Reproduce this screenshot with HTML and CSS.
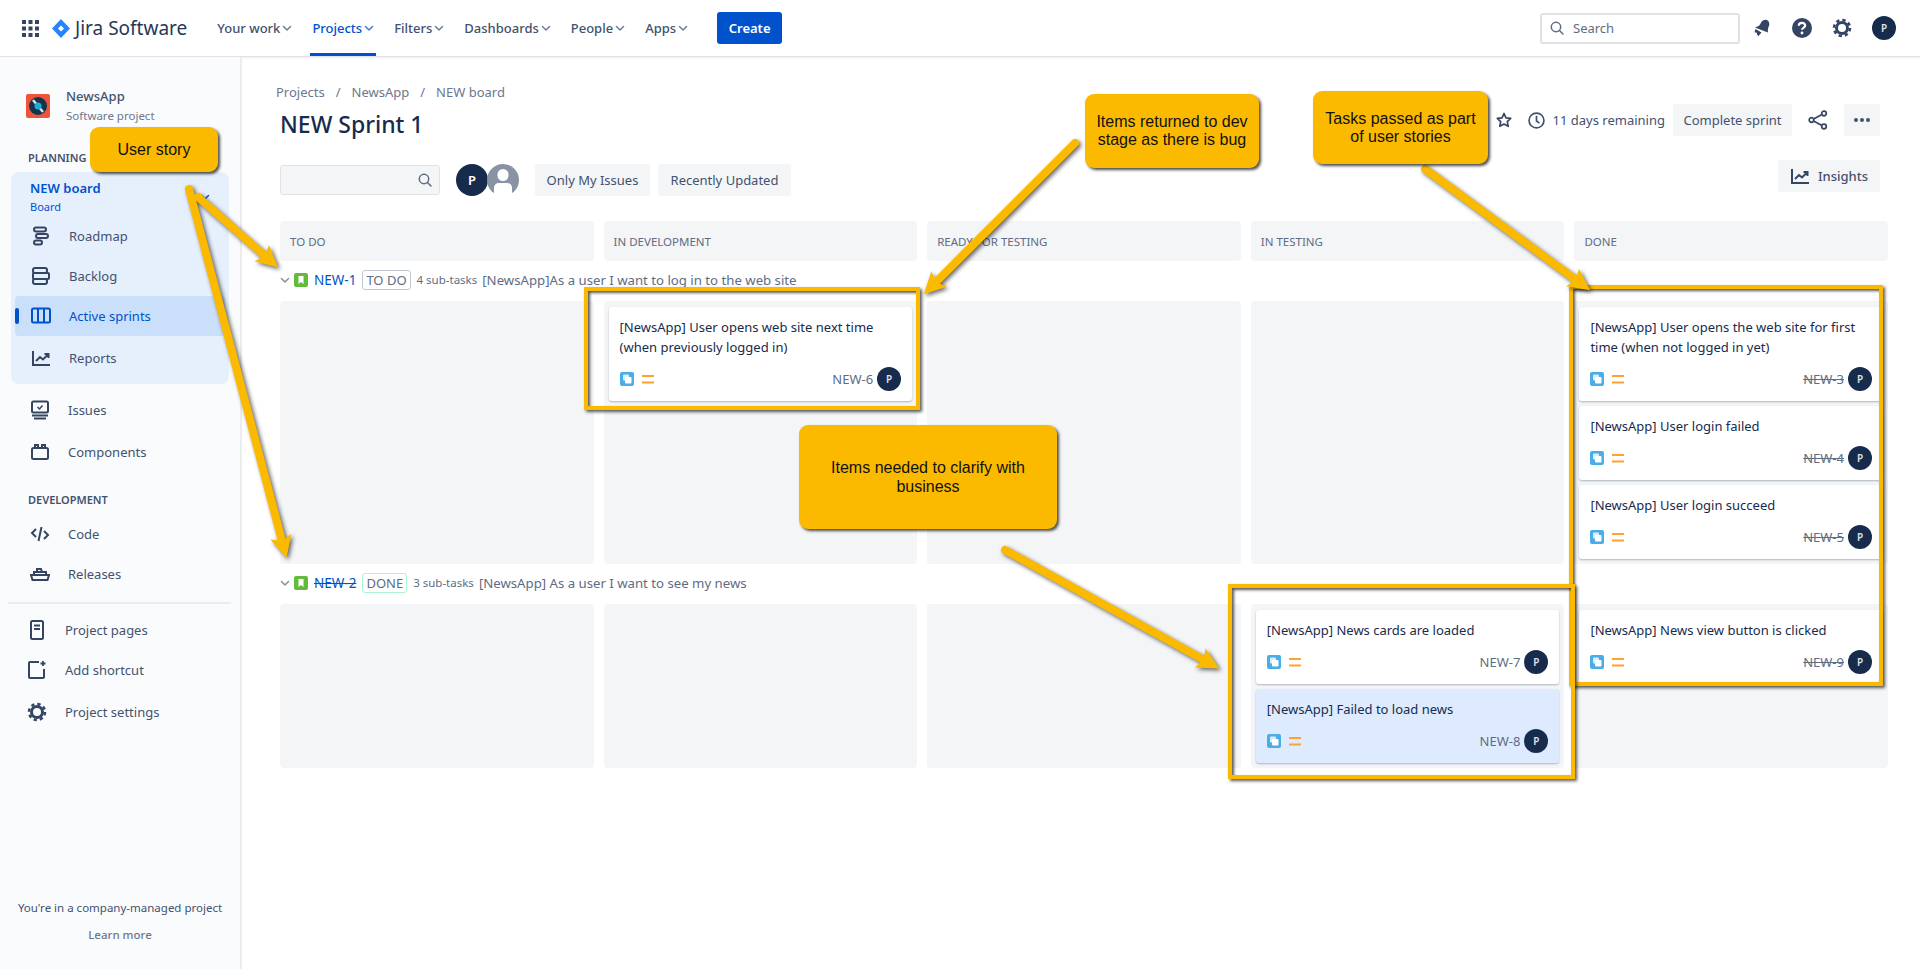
FILE: index.html
```html
<!DOCTYPE html>
<html lang="en">
<head>
  <meta charset="UTF-8" />
  <meta name="viewport" content="width=device-width, initial-scale=1.0"/>
  <title>NEW Sprint 1 - Jira Software</title>
  <link rel="stylesheet" href="styles.css">
</head>
<body>

  <!-- Shared icons -->
  <svg class="icon-defs" aria-hidden="true">
    <symbol id="i-chev" viewBox="0 0 10 10"><path d="M1.5 3.5 5 7l3.5-3.5" fill="none" stroke="currentColor" stroke-width="1.5" stroke-linecap="round" stroke-linejoin="round"/></symbol>
    <symbol id="i-subtask" viewBox="0 0 14 14"><rect width="14" height="14" rx="2" fill="#4bade8"/><rect x="3" y="2.500" width="6" height="6" rx="1" fill="#fff" opacity=".8"/><rect x="5" y="5" width="6.500" height="6.500" rx="1" fill="#fff"/></symbol>
    <symbol id="i-medium" viewBox="0 0 12 9"><path d="M0 1h12M0 7.5h12" stroke="#ffa033" stroke-width="2"/></symbol>
    <symbol id="i-story" viewBox="0 0 14 14"><rect width="14" height="14" rx="2" fill="#63ba3c"/><path d="M4.5 3h5v8L7 9l-2.500 2z" fill="#fff"/></symbol>
    <symbol id="i-search" viewBox="0 0 16 16"><circle cx="7" cy="7" r="4.700" fill="none" stroke="currentColor" stroke-width="1.500"/><path d="m10.500 10.500 3.500 3.500" stroke="currentColor" stroke-width="1.500" stroke-linecap="round"/></symbol>
    <symbol id="i-chart" viewBox="0 0 20 20"><path d="M2 3v14h17" fill="none" stroke="currentColor" stroke-width="2"/><path d="m5 13 4-4 3 2.500L17 6.500M13.500 6H17.500V10" fill="none" stroke="currentColor" stroke-width="2"/></symbol>
    <symbol id="i-gear" viewBox="0 0 20 20"><circle cx="10" cy="10" r="5.500" fill="none" stroke="currentColor" stroke-width="3"/><circle cx="10" cy="10" r="8" fill="none" stroke="currentColor" stroke-width="2.500" stroke-dasharray="3.300 3"/></symbol>
  </svg>

  <!-- Top bar -->
  <header class="topbar">
    <svg class="apps-icon" viewBox="0 0 17 17"><path d="M0 0h4v4H0zM6.500 0h4v4h-4zM13 0h4v4h-4zM0 6.500h4v4H0zM6.500 6.500h4v4h-4zM13 6.500h4v4h-4zM0 13h4v4H0zM6.500 13h4v4h-4zM13 13h4v4h-4z" fill="#344563"/></svg>
    <div class="brand">
      <svg class="brand-mark" viewBox="0 0 18 19"><path d="M9 0 18 9.500 9 19 0 9.500z" fill="#2684ff"/><path d="M9 6.500 12 9.500 9 12.500 6 9.500z" fill="#fff"/></svg>
      <span>Jira Software</span>
    </div>
    <nav class="top-links">
      <a href="#">Your work <svg class="chev"><use href="#i-chev"/></svg></a>
      <a href="#" class="active">Projects <svg class="chev"><use href="#i-chev"/></svg></a>
      <a href="#">Filters <svg class="chev"><use href="#i-chev"/></svg></a>
      <a href="#">Dashboards <svg class="chev"><use href="#i-chev"/></svg></a>
      <a href="#">People <svg class="chev"><use href="#i-chev"/></svg></a>
      <a href="#">Apps <svg class="chev"><use href="#i-chev"/></svg></a>
    </nav>
    <button class="btn-create">Create</button>
    <div class="top-right">
      <div class="top-search"><svg class="search-icon"><use href="#i-search"/></svg><span>Search</span></div>
      <svg class="top-icon" viewBox="0 0 20 20"><path d="M11 2.500c2.500-1.500 5.500-.5 6.200 2.500.4 2-.5 3.500-1 5-.4 1.300-.3 3-.3 4.500L3 9.500c1.500-.7 3-1 4.200-2C8.500 6.300 9 3.700 11 2.500zM3.500 11l6 3.500-3 3.500-1.500-1.500-.2-1.800-2.300-.5z" fill="#344563"/></svg>
      <svg class="top-icon" viewBox="0 0 20 20"><circle cx="10" cy="10" r="10" fill="#344563"/><path d="M6.800 7.800c0-2 1.500-3 3.200-3s3.200 1 3.200 2.800c0 2.200-3.200 2.300-3.200 4.200" fill="none" stroke="#fff" stroke-width="2.200"/><circle cx="10" cy="15" r="1.400" fill="#fff"/></svg>
      <svg class="top-icon gear-dark"><use href="#i-gear"/></svg>
      <span class="avatar">P</span>
    </div>
  </header>

  <div class="page">

    <!-- Sidebar -->
    <aside class="sidebar">
      <div class="project">
        <svg class="project-icon" viewBox="0 0 24 24"><rect width="24" height="24" rx="2" fill="#f0533a"/><circle cx="12" cy="12" r="9" fill="#12344d"/><path d="m7 6 10 12" stroke="#d8e4ec" stroke-width="2.500"/><circle cx="12" cy="12" r="3.500" fill="#25a9d6"/></svg>
        <div>
          <div class="project-name">NewsApp</div>
          <div class="project-type">Software project</div>
        </div>
      </div>

      <div class="side-title">PLANNING</div>
      <div class="board-panel">
        <div class="board-head">
          <div>
            <div class="board-name">NEW board</div>
            <div class="board-type">Board</div>
          </div>
          <svg class="chev board-chev"><use href="#i-chev"/></svg>
        </div>
        <a href="#" class="side-item">
          <svg class="side-icon" viewBox="0 0 20 20" fill="none" stroke="currentColor" stroke-width="2"><rect x="3" y="1.500" width="12" height="4" rx="2"/><rect x="5" y="8" width="12" height="4" rx="2"/><rect x="3" y="14.500" width="8" height="4" rx="2"/></svg>
          Roadmap
        </a>
        <a href="#" class="side-item">
          <svg class="side-icon" viewBox="0 0 20 20" fill="none" stroke="currentColor" stroke-width="2"><rect x="2" y="2" width="14" height="5" rx="2"/><rect x="2" y="7" width="16" height="6" rx="1"/><rect x="2" y="13" width="14" height="5" rx="2"/></svg>
          Backlog
        </a>
        <a href="#" class="side-item current">
          <svg class="side-icon" viewBox="0 0 20 20" fill="none" stroke="currentColor" stroke-width="2"><rect x="1" y="2.500" width="18" height="14" rx="1.500"/><path d="M7 2.500v14M13 2.500v14"/></svg>
          Active sprints
        </a>
        <a href="#" class="side-item item-reports">
          <svg class="side-icon"><use href="#i-chart"/></svg>
          Reports
        </a>
      </div>

      <a href="#" class="side-item outer item-issues">
        <svg class="side-icon" viewBox="0 0 20 20" fill="none" stroke="currentColor" stroke-width="2"><rect x="2" y="1.500" width="16" height="11" rx="1.500"/><path d="m7.500 7 2 2 3-3.500" stroke-width="1.500"/><path d="M2 15.500h16M4 18.500h12"/></svg>
        Issues
      </a>
      <a href="#" class="side-item outer item-components">
        <svg class="side-icon" viewBox="0 0 20 20" fill="none" stroke="currentColor" stroke-width="2"><rect x="2" y="6" width="16" height="11" rx="1.500"/><path d="M5 6V3h3v3M12 6V3h3v3"/></svg>
        Components
      </a>

      <div class="side-title dev-title">DEVELOPMENT</div>
      <a href="#" class="side-item outer">
        <svg class="side-icon" viewBox="0 0 20 20" fill="none" stroke="currentColor" stroke-width="2"><path d="M6 5 2 9l4 4M14 7l4 4-4 4M11.500 3 8.500 17"/></svg>
        Code
      </a>
      <a href="#" class="side-item outer">
        <svg class="side-icon" viewBox="0 0 20 20" fill="none" stroke="currentColor" stroke-width="2"><path d="M1 11h18l-1.500 5h-15zM4 11V8h12v3M7 8V5h4l1 3"/></svg>
        Releases
      </a>

      <div class="side-line"></div>

      <a href="#" class="side-item short">
        <svg class="side-icon" viewBox="0 0 20 20" fill="none" stroke="currentColor" stroke-width="2"><rect x="4" y="1" width="12" height="18" rx="1.500"/><path d="M7 5.500h6M7 9h6" stroke-width="1.800"/></svg>
        Project pages
      </a>
      <a href="#" class="side-item short">
        <svg class="side-icon" viewBox="0 0 20 20" fill="none" stroke="currentColor" stroke-width="2"><path d="M12 2H3a1 1 0 0 0-1 1v14a1 1 0 0 0 1 1h13a1 1 0 0 0 1-1V9"/><path d="M16 1v5M13.500 3.500h5" stroke-width="1.800"/></svg>
        Add shortcut
      </a>
      <a href="#" class="side-item short item-settings">
        <svg class="side-icon"><use href="#i-gear"/></svg>
        Project settings
      </a>

      <div class="side-foot">
        <p>You're in a company-managed project</p>
        <a href="#">Learn more</a>
      </div>
    </aside>

    <!-- Board -->
    <main class="main">
      <div class="crumbs">
        <a href="#">Projects</a><span>/</span><a href="#">NewsApp</a><span>/</span><a href="#">NEW board</a>
      </div>

      <div class="title-row">
        <h1>NEW Sprint 1</h1>
        <div class="sprint-actions">
          <svg class="star" viewBox="0 0 16 16"><path d="m8 1.500 2 4.300 4.700.6-3.400 3.200.9 4.700L8 12l-4.200 2.300.9-4.700L1.300 6.400 6 5.800z" fill="none" stroke="#344563" stroke-width="1.700" stroke-linejoin="round"/></svg>
          <svg class="clock" viewBox="0 0 16 16"><circle cx="8" cy="8" r="7" fill="none" stroke="#42526e" stroke-width="1.600"/><path d="M8 3.500V8.500l2.800 2" fill="none" stroke="#42526e" stroke-width="1.600"/></svg>
          <span class="remaining">11 days remaining</span>
          <button class="btn-soft btn-complete">Complete sprint</button>
          <svg class="share" viewBox="0 0 20 20" fill="none" stroke="#344563" stroke-width="1.700"><circle cx="16" cy="3.500" r="2.300"/><circle cx="16" cy="16.500" r="2.300"/><circle cx="3.500" cy="10" r="2.300"/><path d="m5.500 9 8.500-4.500M5.500 11l8.500 4.500"/></svg>
          <button class="btn-soft btn-more"><i></i><i></i><i></i></button>
        </div>
      </div>

      <div class="filter-row">
        <div class="filters">
          <div class="filter-search"><svg class="search-icon"><use href="#i-search"/></svg></div>
          <div class="people">
            <span class="avatar avatar-big">P</span>
            <svg class="avatar-none" viewBox="0 0 32 32"><circle cx="16" cy="16" r="16" fill="#8993a4"/><rect x="10.500" y="5" width="11" height="12" rx="5.500" fill="#fff"/><path d="M7 32v-8c0-3 2-5 5-5h8c3 0 5 2 5 5v8z" fill="#fff"/></svg>
          </div>
          <button class="btn-soft btn-filter btn-mine">Only My Issues</button>
          <button class="btn-soft btn-filter btn-recent">Recently Updated</button>
        </div>
        <button class="btn-soft btn-insights"><svg class="insight-icon"><use href="#i-chart"/></svg>Insights</button>
      </div>

      <div class="board">
        <div class="col-head">TO DO</div>
        <div class="col-head">IN DEVELOPMENT</div>
        <div class="col-head">READY FOR TESTING</div>
        <div class="col-head">IN TESTING</div>
        <div class="col-head">DONE</div>

        <div class="lane">
          <svg class="chev lane-chev"><use href="#i-chev"/></svg>
          <svg class="lane-icon"><use href="#i-story"/></svg>
          <a href="#" class="lane-key">NEW-1</a>
          <span class="lane-status">TO DO</span>
          <span class="lane-count">4 sub-tasks</span>
          <span class="lane-title">[NewsApp]As a user I want to log in to the web site</span>
        </div>

        <div class="cell row-one"></div>
        <div class="cell row-one">
          <div class="card">
            <p>[NewsApp] User opens web site next time (when previously logged in)</p>
            <div class="card-foot">
              <svg class="type-icon"><use href="#i-subtask"/></svg><svg class="prio-icon"><use href="#i-medium"/></svg>
              <span class="card-key">NEW-6</span><span class="avatar">P</span>
            </div>
          </div>
        </div>
        <div class="cell row-one"></div>
        <div class="cell row-one"></div>
        <div class="cell row-one">
          <div class="card">
            <p>[NewsApp] User opens the web site for first time (when not logged in yet)</p>
            <div class="card-foot">
              <svg class="type-icon"><use href="#i-subtask"/></svg><svg class="prio-icon"><use href="#i-medium"/></svg>
              <span class="card-key done">NEW-3</span><span class="avatar">P</span>
            </div>
          </div>
          <div class="card">
            <p>[NewsApp] User login failed</p>
            <div class="card-foot">
              <svg class="type-icon"><use href="#i-subtask"/></svg><svg class="prio-icon"><use href="#i-medium"/></svg>
              <span class="card-key done">NEW-4</span><span class="avatar">P</span>
            </div>
          </div>
          <div class="card">
            <p>[NewsApp] User login succeed</p>
            <div class="card-foot">
              <svg class="type-icon"><use href="#i-subtask"/></svg><svg class="prio-icon"><use href="#i-medium"/></svg>
              <span class="card-key done">NEW-5</span><span class="avatar">P</span>
            </div>
          </div>
        </div>

        <div class="lane">
          <svg class="chev lane-chev"><use href="#i-chev"/></svg>
          <svg class="lane-icon"><use href="#i-story"/></svg>
          <a href="#" class="lane-key done">NEW-2</a>
          <span class="lane-status status-done">DONE</span>
          <span class="lane-count">3 sub-tasks</span>
          <span class="lane-title">[NewsApp] As a user I want to see my news</span>
        </div>

        <div class="cell row-two"></div>
        <div class="cell row-two"></div>
        <div class="cell row-two"></div>
        <div class="cell row-two">
          <div class="card">
            <p>[NewsApp] News cards are loaded</p>
            <div class="card-foot">
              <svg class="type-icon"><use href="#i-subtask"/></svg><svg class="prio-icon"><use href="#i-medium"/></svg>
              <span class="card-key">NEW-7</span><span class="avatar">P</span>
            </div>
          </div>
          <div class="card selected">
            <p>[NewsApp] Failed to load news</p>
            <div class="card-foot">
              <svg class="type-icon"><use href="#i-subtask"/></svg><svg class="prio-icon"><use href="#i-medium"/></svg>
              <span class="card-key">NEW-8</span><span class="avatar">P</span>
            </div>
          </div>
        </div>
        <div class="cell row-two">
          <div class="card">
            <p>[NewsApp] News view button is clicked</p>
            <div class="card-foot">
              <svg class="type-icon"><use href="#i-subtask"/></svg><svg class="prio-icon"><use href="#i-medium"/></svg>
              <span class="card-key done">NEW-9</span><span class="avatar">P</span>
            </div>
          </div>
        </div>
      </div>
    </main>
  </div>

  <!-- Annotations drawn over the screenshot -->
  <div class="notes">
    <div class="mark mark-dev"></div>
    <div class="mark mark-done"></div>
    <div class="mark mark-test"></div>

    <svg class="arrows" viewBox="0 0 1920 969">
      <defs>
        <marker id="head" markerUnits="userSpaceOnUse" markerWidth="24" markerHeight="24" viewBox="-2 -11 22 22" refX="2" refY="0" orient="auto">
          <path d="M-2 -10 18 0-2 10 2 0z" fill="#fbba00"/>
        </marker>
      </defs>
      <g class="arrow-lines">
        <line x1="198" y1="197" x2="265" y2="256"/>
        <line x1="189" y1="189" x2="282" y2="541"/>
        <line x1="1075" y1="143" x2="936" y2="282"/>
        <line x1="1425" y1="169" x2="1576" y2="280"/>
        <line x1="1005" y1="550" x2="1204" y2="660"/>
      </g>
    </svg>

    <div class="callout note-story">User story</div>
    <div class="callout note-dev">Items returned to dev stage as there is bug</div>
    <div class="callout note-tasks">Tasks passed as part of user stories</div>
    <div class="callout note-clarify">Items needed to clarify with business</div>
  </div>

</body>
</html>
```

FILE: styles.css
```css
* {
  box-sizing: border-box;
}

html, body {
  height: 100%;
}

body {
  margin: 0;
  position: relative;
  overflow: hidden;
  font-family: 'Noto Sans', sans-serif;
  font-size: 13px;
  color: #172b4d;
  background-color: #fff;
}

a {
  color: inherit;
  text-decoration: none;
}

button {
  font-family: inherit;
  font-size: 13px;
  border: none;
  cursor: pointer;
}

.icon-defs {
  position: absolute;
  width: 0;
  height: 0;
}

/* Top bar */
.topbar {
  display: flex;
  align-items: center;
  height: 57px;
  padding: 0 24px 0 22px;
  background-color: #fff;
  border-bottom: 1px solid #dfe1e6;
  box-shadow: 0 1px 2px rgba(9,30,66,0.08);
}

.apps-icon {
  width: 17px;
  height: 17px;
}

.brand {
  display: flex;
  align-items: center;
  margin-left: 13px;
  font-size: 19px;
  color: #253858;
}

.brand-mark {
  width: 18px;
  height: 19px;
  margin-right: 5px;
}

.top-links {
  display: flex;
  align-self: stretch;
  margin-left: 28px;
  gap: 16px;
}

.top-links a {
  display: flex;
  align-items: center;
  gap: 2px;
  padding: 0 2px;
  color: #42526e;
  font-weight: 500;
  border-bottom: 3px solid transparent;
  border-top: 3px solid transparent;
}

.top-links a.active {
  color: #0052cc;
  border-bottom-color: #0052cc;
}

.chev {
  width: 10px;
  height: 10px;
  opacity: 0.75;
}

.btn-create {
  width: 65px;
  height: 32px;
  margin-left: 27px;
  color: #fff;
  font-weight: 600;
  background-color: #0052cc;
  border-radius: 3px;
}

.top-right {
  display: flex;
  align-items: center;
  margin-left: auto;
}

.top-search {
  display: flex;
  align-items: center;
  width: 200px;
  height: 31px;
  padding-left: 7px;
  color: #5e6c84;
  border: 2px solid #dfe1e6;
  border-radius: 3px;
}

.search-icon {
  width: 16px;
  height: 16px;
  margin-right: 8px;
  color: #5e6c84;
}

.top-icon {
  width: 20px;
  height: 20px;
  margin-left: 20px;
}

.top-icon + .top-icon {
  margin-left: 20px;
}

.top-search + .top-icon {
  margin-left: 12px;
}

.gear-dark {
  color: #344563;
}

.avatar {
  display: flex;
  align-items: center;
  justify-content: center;
  flex-shrink: 0;
  width: 24px;
  height: 24px;
  color: #dfe1e6;
  font-size: 10px;
  font-weight: 600;
  background-color: #172b4d;
  border-radius: 50%;
}

.top-right .avatar {
  margin-left: 20px;
}

/* Sidebar */
.page {
  display: flex;
  height: calc(100% - 57px);
}

.sidebar {
  display: flex;
  flex-direction: column;
  flex-shrink: 0;
  width: 242px;
  padding-top: 29px;
  background-color: #fafbfc;
  border-right: 2px solid #ebecf0;
}

.project {
  display: flex;
  align-items: center;
  gap: 16px;
  padding-left: 26px;
}

.project-icon {
  width: 24px;
  height: 24px;
}

.project-name {
  line-height: 20px;
  color: #42526e;
  font-weight: 500;
}

.project-type {
  line-height: 20px;
  font-size: 11.500px;
  color: #6b778c;
}

.side-title {
  margin: 22px 0 4px 28px;
  line-height: 20px;
  font-size: 11px;
  font-weight: 600;
  color: #42526e;
}

.dev-title {
  margin: 18px 0 4px 28px;
}

.board-panel {
  height: 212px;
  margin: 0 11px;
  padding: 0 4px;
  background-color: #e6effc;
  border-radius: 8px;
}

.board-head {
  display: flex;
  align-items: flex-start;
  justify-content: space-between;
  height: 44px;
  padding: 6px 15px 0;
  color: #0052cc;
}

.board-name {
  line-height: 20px;
  font-weight: 600;
}

.board-type {
  line-height: 18px;
  font-size: 11px;
}

.board-chev {
  margin-top: 14px;
  opacity: 1;
}

.side-item {
  display: flex;
  align-items: center;
  position: relative;
  height: 40px;
  gap: 18px;
  padding-left: 16px;
  color: #42526e;
  border-radius: 4px;
}

.side-icon {
  flex-shrink: 0;
  width: 20px;
  height: 20px;
  color: #344563;
}

.side-item.current {
  color: #0052cc;
  background-color: #c9dffa;
}

.side-item.current .side-icon {
  color: #0052cc;
}

.side-item.current::before {
  content: "";
  position: absolute;
  left: 0;
  top: 12px;
  width: 4px;
  height: 16px;
  background-color: #0052cc;
  border-radius: 2px;
}

.item-reports {
  margin-top: 2px;
}

.side-item.outer {
  padding-left: 30px;
}

.item-issues {
  margin-top: 6px;
}

.item-components {
  margin-top: 2px;
}

.side-line {
  height: 2px;
  margin: 8px 9px 6px 8px;
  background-color: #ebecf0;
}

.side-item.short {
  padding-left: 27px;
}

.item-settings {
  margin-top: 2px;
}

.side-foot {
  margin-top: auto;
  padding-bottom: 25px;
  text-align: center;
  font-size: 11.500px;
  color: #42526e;
}

.side-foot p {
  margin: 0 0 9px;
  line-height: 18px;
}

.side-foot a {
  line-height: 18px;
  font-weight: 500;
  color: #6b778c;
}

/* Main */
.main {
  flex: 1;
  min-width: 0;
  padding: 23px 32px 0 38px;
}

.crumbs {
  display: flex;
  gap: 11px;
  height: 24px;
  margin-left: -4px;
  align-items: center;
  color: #6b778c;
}

.title-row {
  display: flex;
  justify-content: space-between;
  height: 56px;
  padding-right: 8px;
}

h1 {
  margin: 0;
  line-height: 40px;
  font-size: 23px;
  font-weight: 500;
  color: #172b4d;
}

.sprint-actions {
  display: flex;
  align-items: center;
  align-self: flex-start;
  height: 32px;
}

.star {
  width: 16px;
  height: 16px;
}

.clock {
  width: 17px;
  height: 17px;
  margin-left: 16px;
}

.remaining {
  margin-left: 8px;
  color: #42526e;
}

.btn-soft {
  color: #42526e;
  background-color: #f4f5f7;
  border-radius: 3px;
}

.btn-complete {
  width: 119px;
  height: 32px;
  margin-left: 8px;
}

.share {
  width: 20px;
  height: 20px;
  margin-left: 16px;
}

.btn-more {
  display: flex;
  align-items: center;
  justify-content: center;
  gap: 2px;
  width: 36px;
  height: 32px;
  margin-left: 16px;
}

.btn-more i {
  width: 4px;
  height: 4px;
  background-color: #42526e;
  border-radius: 50%;
}

.filter-row {
  display: flex;
  justify-content: space-between;
  padding-right: 8px;
}

.filters {
  display: flex;
  align-items: center;
  margin-top: 4px;
}

.filter-search {
  display: flex;
  align-items: center;
  justify-content: flex-end;
  width: 160px;
  height: 30px;
  background-color: #f4f5f7;
  border: 1px solid #dfe1e6;
  border-radius: 3px;
}

.filter-search .search-icon {
  margin-right: 6px;
}

.people {
  display: flex;
  margin: 0 16px;
}

.avatar-big {
  width: 32px;
  height: 32px;
  font-size: 13px;
  color: #fff;
}

.avatar-none {
  width: 32px;
  height: 32px;
  margin-left: -1px;
}

.btn-filter {
  height: 32px;
  margin-right: 8px;
}

.btn-mine {
  width: 115px;
}

.btn-recent {
  width: 133px;
}

.btn-insights {
  display: flex;
  align-items: center;
  justify-content: center;
  gap: 8px;
  width: 102px;
  height: 32px;
  font-weight: 500;
}

.insight-icon {
  width: 20px;
  height: 20px;
  color: #344563;
}

/* Board grid */
.board {
  display: grid;
  grid-template-columns: repeat(5, 1fr);
  column-gap: 10px;
  margin-top: 25px;
}

.col-head {
  height: 40px;
  padding: 12px 10px 0;
  line-height: 18px;
  font-size: 11.500px;
  color: #5e6c84;
  background-color: #f4f5f7;
  border-radius: 4px;
}

.lane {
  grid-column: 1 / -1;
  display: flex;
  align-items: center;
  height: 40px;
  padding-bottom: 3px;
  color: #5e6c84;
}

.lane-chev {
  margin-left: 0;
  margin-right: 4px;
}

.lane-icon {
  width: 14px;
  height: 14px;
  margin-right: 6px;
}

.lane-key {
  font-size: 13.500px;
  color: #0052cc;
}

.lane-key.done {
  text-decoration: line-through;
}

.lane-status {
  display: flex;
  align-items: center;
  height: 20px;
  margin: 0 6px 0 6px;
  padding: 0 3px;
  color: #5e6c84;
  border: 1px solid #c1c7d0;
  border-radius: 3px;
}

.status-done {
  border-color: #abf5d1;
}

.lane-count {
  margin-right: 5px;
  font-size: 11.500px;
}

.lane-title {
  font-size: 13.200px;
}

.cell {
  display: flex;
  flex-direction: column;
  gap: 5px;
  padding: 6px 5px;
  background-color: #f4f5f7;
  border-radius: 4px;
}

.row-one {
  height: 263px;
}

.row-two {
  height: 164px;
}

.card {
  padding: 10px 11px;
  background-color: #fff;
  border-radius: 3px;
  box-shadow: 0 1px 2px rgba(9,30,66,0.3);
}

.card.selected {
  background-color: #deebff;
}

.card p {
  margin: 0 0 10px;
  line-height: 20px;
}

.card-foot {
  display: flex;
  align-items: center;
  height: 24px;
}

.type-icon {
  width: 14px;
  height: 14px;
  margin-right: 8px;
}

.prio-icon {
  width: 12px;
  height: 9px;
}

.card-key {
  margin-left: auto;
  margin-right: 4px;
  color: #5e6c84;
}

.card-key.done {
  text-decoration: line-through;
}

/* Annotations */
.notes {
  position: absolute;
  inset: 0;
  pointer-events: none;
}

.arrows {
  position: absolute;
  left: 0;
  top: 0;
  width: 1920px;
  height: 969px;
}

.arrow-lines {
  filter: drop-shadow(2px 2px 2px rgba(0,0,0,0.6));
}

.arrow-lines line {
  stroke: #fbba00;
  stroke-width: 8;
  stroke-linecap: round;
  marker-end: url(#head);
}

.mark {
  position: absolute;
  border: 4px solid #fbba00;
  box-shadow: 2px 2px 3px rgba(0,0,0,0.65), inset 2px 2px 3px rgba(0,0,0,0.65);
}

.mark-dev {
  left: 584px;
  top: 287px;
  width: 336px;
  height: 123px;
}

.mark-done {
  left: 1569px;
  top: 285px;
  width: 314px;
  height: 401px;
}

.mark-test {
  left: 1228px;
  top: 584px;
  width: 347px;
  height: 195px;
}

.callout {
  position: absolute;
  display: flex;
  align-items: center;
  justify-content: center;
  padding: 0 10px;
  text-align: center;
  line-height: 18px;
  font-family: 'Liberation Sans', Arial, sans-serif;
  font-size: 16px;
  color: #111;
  background-color: #fbba00;
  border-radius: 9px;
  box-shadow: 2px 2px 3px rgba(0,0,0,0.7);
}

.note-story {
  left: 90px;
  top: 127px;
  width: 128px;
  height: 45px;
}

.note-dev {
  left: 1085px;
  top: 94px;
  width: 174px;
  height: 74px;
}

.note-tasks {
  left: 1313px;
  top: 91px;
  width: 175px;
  height: 73px;
}

.note-clarify {
  left: 799px;
  top: 425px;
  width: 258px;
  height: 104px;
  padding: 0 30px;
  line-height: 19px;
}
```
